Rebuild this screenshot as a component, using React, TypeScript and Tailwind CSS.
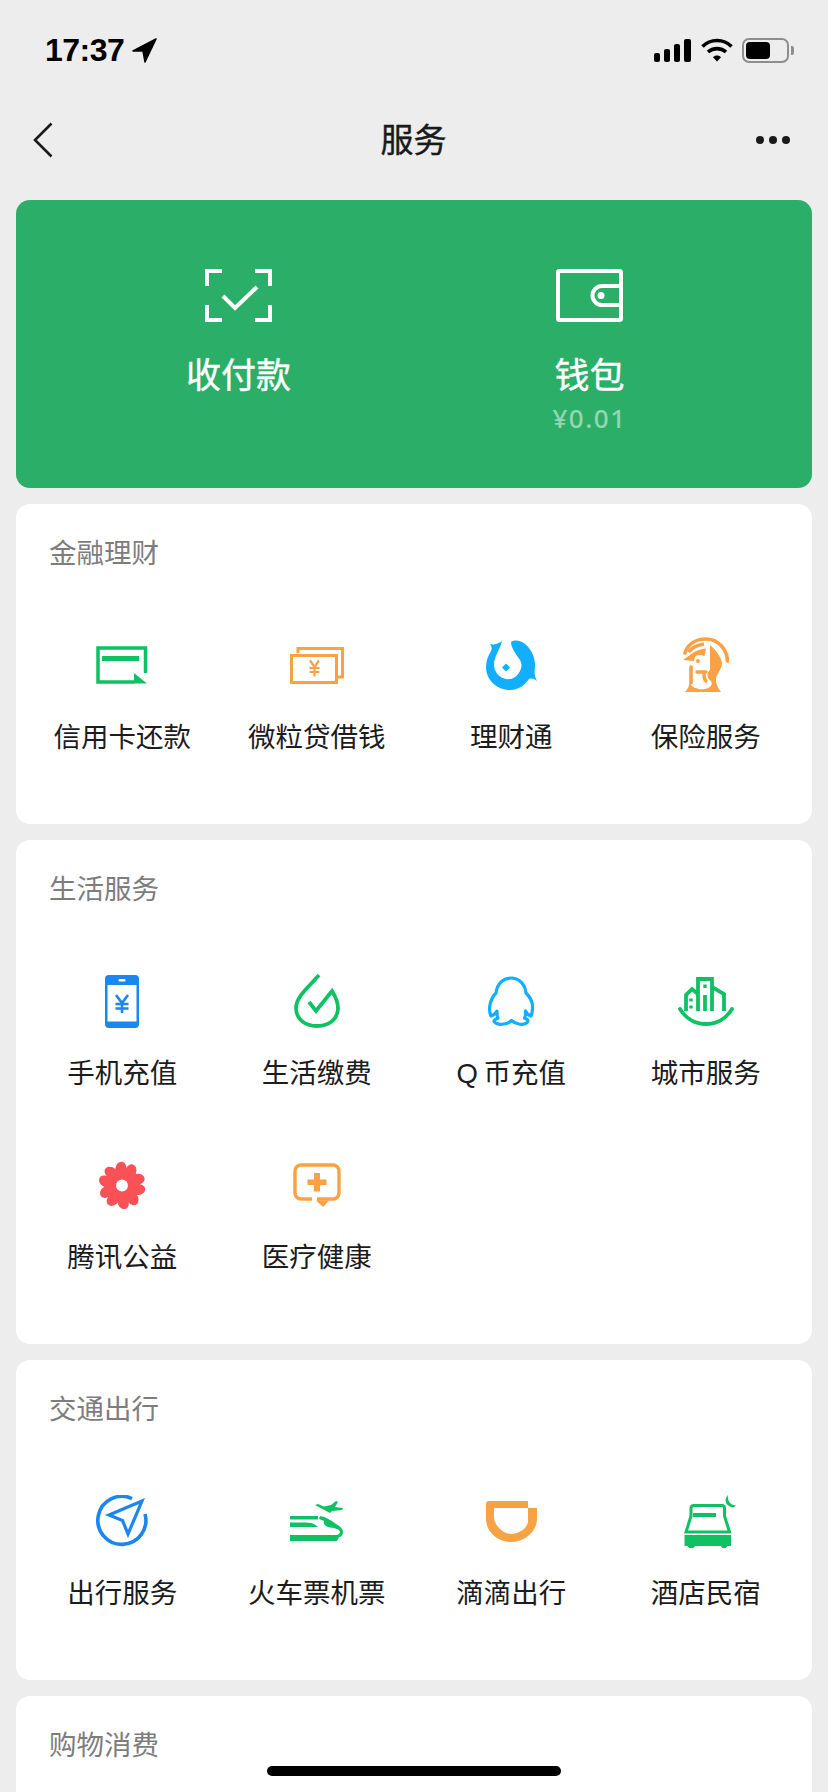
import type { ReactNode } from 'react';

const GREEN = '#0ec162';
const ORANGE = '#f9a145';
const SKY = '#12aeff';
const BLUE = '#1a86ee';
const RED = '#fa5157';

function CardIcon() {
  return (
    <svg width="52" height="38" viewBox="0 0 52 38" fill="none">
      <path d="M38 36H2V2H49.5V27" stroke={GREEN} strokeWidth="3.5" />
      <path d="M6 10H43V15H6Z" fill={GREEN} />
      <path d="M38 27L51 37.5H38Z" fill={GREEN} />
    </svg>
  );
}

function LoanIcon() {
  return (
    <svg width="54" height="37" viewBox="0 0 54 37" fill="none" stroke={ORANGE} strokeWidth="3">
      <path d="M8 6V1.5H52.5V30H48" />
      <rect x="1.5" y="8.5" width="45" height="27" />
      <path d="M20 13.5L24.5 20L29 13.5M24.5 20V29.5M19.5 21H29.5M19.5 25H29.5" strokeWidth="2.2" />
    </svg>
  );
}

function LicaiIcon() {
  return (
    <svg width="51" height="50" viewBox="0 0 51 50">
      <path
        d="M16 1C12 4 8 5 4 4C6 7 6 9 5 11C2 16 0 21 0 27C0 40 11 50 24 50C32 50 38 46 43 39C46 38 49 39 51 41C49 37 48 34 49 27C50 16 42 1 30 0.5C28 0.5 26 1 25 2C25 8 30 14 34 20C36 24 36 27 34 31C31 37 26 40 20 39C13 38 8 31 8 25C8 16 14 10 16 1Z"
        fill={SKY}
      />
      <path d="M20 23.5L24 27.5L20 31.5L16 27.5Z" fill={SKY} />
    </svg>
  );
}

function InsuranceIcon() {
  return (
    <svg width="46" height="56" viewBox="0 0 46 56" fill="none">
      <path d="M2 16C5 7 13 2 23 2C35 2 44 12 44.5 24" stroke={ORANGE} strokeWidth="3.6" strokeLinecap="round" />
      <path d="M5.5 15C9 10.5 14 8 21 7" stroke={ORANGE} strokeWidth="3.6" />
      {/* head with beak */}
      <path d="M0 23L9 16.5C13 13.5 18 12 23 11.5L21.5 19C17 17 13 18 12 20L11 24Z" fill={ORANGE} />
      {/* solid right side of the body */}
      <path d="M27 8C33 13 39 21 39 27C38 34 33 37 33 43C33 48 36 52 38 55H2C5 52 6 49 6.5 46C9 51 16 53 22 52C28 51 30 47 28 44C25 42 24.5 40 24.5 36L27 33Z" fill={ORANGE} />
      {/* left edge of the neck */}
      <path d="M8 30V46" stroke={ORANGE} strokeWidth="3.6" strokeLinecap="round" />
      {/* beard */}
      <path d="M14 35H23" stroke={ORANGE} strokeWidth="3.4" strokeLinecap="round" />
      <path d="M21 36C21 40 21 43 24 45" stroke={ORANGE} strokeWidth="3.4" />
      <circle cx="15" cy="24" r="2" fill={ORANGE} />
    </svg>
  );
}

function PhoneIcon() {
  return (
    <svg width="34" height="53" viewBox="0 0 34 53">
      <rect width="34" height="53" rx="4" fill={BLUE} />
      <rect x="2.5" y="10" width="29" height="36.5" fill="#fff" />
      <rect x="13.5" y="4" width="7" height="2.4" rx="1" fill="#fff" />
      <path d="M11 20L17 28L23 20M17 28V38M10.5 29H23.5M10.5 33.5H23.5" fill="none" stroke={BLUE} strokeWidth="2.6" />
    </svg>
  );
}

function BillIcon() {
  return (
    <svg width="46" height="54" viewBox="0 0 46 54" fill="none" stroke={GREEN} strokeWidth="3.8">
      <path d="M25 1C17 11 2 22 2 34C2 45 11 52 23 52C35 52 44 45 44 34C44 28 41 22 38 17L22 37L15 28" />
    </svg>
  );
}

function QqIcon() {
  return (
    <svg width="46" height="50" viewBox="0 0 46 50" fill="none" stroke={SKY} strokeWidth="3.2" strokeLinejoin="round">
      <path d="M23 2C31 2 37 8 38 17C42 21 45 26 44.5 32C44.5 36 44 38 43 40C40 39 38.5 37 37.5 35C37.5 38 37.5 41 36.5 42C39 43 40 44 40 45C39 48 34 49 31 48C28 47.5 26 47 23.5 44.5C21 47 19 48 15 48C11 49 6 47 6 45C6 44 8 43 10 42C9 41 9 38 9 35C8 37 6 39 3 40C2 38 1.5 35 1.5 32C2 26 4 21 8 17C9 8 15 2 23 2Z" />
    </svg>
  );
}

function CityIcon() {
  return (
    <svg width="56" height="50" viewBox="0 0 56 50" fill="none" stroke={GREEN} strokeWidth="3.8">
      <path d="M2 33C8 43 18 48 28 48C38 48 48 43 54 33" strokeLinecap="round" />
      <path d="M8 35V19L14 13L20 18" />
      <path d="M20 35V3H34V35" />
      <path d="M34 11L46 18V35" />
      <path d="M13 22.5V25.5M13 29.5V32.5" strokeWidth="3.4" />
      <path d="M27 8.5V12" strokeWidth="3.4" />
      <path d="M27 19V35" />
    </svg>
  );
}

function FlowerIcon() {
  return (
    <svg width="48" height="49" viewBox="-24 -24.5 48 49">
      {[14, 86, 158, 230, 302].map((angle) => (
        <path
          key={angle}
          transform={`rotate(${angle})`}
          d="M0 0C-5 -4 -11.5 -10 -10.5 -17.5C-9.5 -24 -2 -25.5 0 -18C2 -25.5 9.5 -24 10.5 -17.5C11.5 -10 5 -4 0 0Z"
          fill={RED}
        />
      ))}
      <circle r="9" fill={RED} />
      <circle r="6" fill="#fff" />
    </svg>
  );
}

function MedicalIcon() {
  return (
    <svg width="48" height="44" viewBox="0 0 48 44" fill="none">
      <path d="M19 36H8A6 6 0 0 1 2 30V8A6 6 0 0 1 8 2H40A6 6 0 0 1 46 8V30A6 6 0 0 1 40 36H24" stroke={ORANGE} strokeWidth="3.4" />
      <path d="M23 37.5H36L30 44Z" fill={ORANGE} />
      <path d="M21 10H27V16.5H33.5V22H27V28.5H21V22H14.5V16.5H21Z" fill={ORANGE} />
    </svg>
  );
}

function TravelIcon() {
  return (
    <svg width="52" height="52" viewBox="0 0 52 52" fill="none" stroke={BLUE}>
      <path d="M36 3.6A24 24 0 1 0 49 19" strokeWidth="3.6" />
      <path d="M46 6L13 20L26.5 25.5L32 39Z" strokeWidth="3.2" />
    </svg>
  );
}

function TrainIcon() {
  return (
    <svg width="54" height="40" viewBox="0 0 54 40" fill={GREEN}>
      <path d="M25 4L28 3L34 5.5L41 4L46 0L48 1L45 6L53 7L52 9L42 10L40 12Z" />
      <path d="M0 15H28V18.5H0Z" />
      <path d="M0 21.5H15C21 21.5 25 23 28 26H0Z" />
      <path d="M0 34H50L47 40H0Z" />
      <path d="M30 15C36 16 41 19 46 23C50 25 53 28 53 31C53 33 52 35 50 36H44C47 34 50 33 50 31C50 28 44 27 38 26C35 25 33 22 34 20L29 18Z" />
    </svg>
  );
}

function DidiIcon() {
  return (
    <svg width="51" height="41" viewBox="0 0 51 41">
      <path
        fillRule="evenodd"
        d="M0 3Q0 0 3 0H42V7H51V18C51 31 38 41 25 41C12 41 0 31 0 18ZM8 7V16C8 24 17 33 25 33C33 33 42 27 42 20V7Z"
        fill={ORANGE}
      />
    </svg>
  );
}

function HotelIcon() {
  return (
    <svg width="60" height="54" viewBox="-8 0 60 54" fill="none">
      <path d="M44 1C40 5 41 11 47 13C49 13.5 51 13 52 11.5C47 11.5 43 7 44 1Z" fill={GREEN} />
      <path d="M7 22V14Q7 11.5 10 11.5H38Q40.5 11.5 40.5 14V22L45.5 38H2L7 22Z" stroke={GREEN} strokeWidth="3" />
      <path d="M9 19H32V23H9Z" fill={GREEN} />
      <path d="M0.5 41H47V52H43.5L42 54H38L37 52H11L9.5 54H5L3.5 52H0.5Z" fill={GREEN} />
    </svg>
  );
}

function ServiceCell({ icon, label }: { icon: ReactNode; label: string }) {
  return (
    <div className="flex flex-col items-center pt-[65px]">
      <div className="flex h-[56px] items-center justify-center">{icon}</div>
      <span className="mt-[27px] text-[27.5px] leading-[36px] text-[#1c1c1c]">{label}</span>
    </div>
  );
}

function Section({ title, items }: { title: string; items: { icon: ReactNode; label: string }[] }) {
  return (
    <section className="rounded-[14px] bg-white pb-[68px]">
      <h2 className="pl-[33px] pt-[32px] text-[27.5px] font-normal leading-[36px] text-[#7d7d7d]">{title}</h2>
      <div className="grid grid-cols-4 px-[9px]">
        {items.map((item) => (
          <ServiceCell key={item.label} icon={item.icon} label={item.label} />
        ))}
      </div>
    </section>
  );
}

export default function App() {
  return (
    <div
      className="relative h-[1792px] w-[828px] overflow-hidden bg-[#ededed]"
      style={{ fontFamily: '"Liberation Sans", "Noto Sans CJK SC", sans-serif' }}
    >
      {/* Status bar */}
      <div className="flex h-[100px] items-center justify-between pl-[45px] pr-[34px]">
        <div className="flex items-center gap-[8px]">
          <span className="text-[32px] font-bold leading-none tracking-[-0.5px] text-black">17:37</span>
          <svg width="25" height="25" viewBox="0 0 25 25" fill="#000">
            <path d="M24 1L1 13H11L13 24Z" stroke="#000" strokeWidth="1.5" strokeLinejoin="round" />
          </svg>
        </div>
        <div className="flex items-center">
          <div className="flex items-end gap-[4px]">
            <div className="h-[9px] w-[6px] rounded-[2px] bg-black" />
            <div className="h-[13px] w-[6px] rounded-[2px] bg-black" />
            <div className="h-[18px] w-[6px] rounded-[2px] bg-black" />
            <div className="h-[23px] w-[7px] rounded-[2px] bg-black" />
          </div>
          <svg className="ml-[10px]" width="32" height="24" viewBox="0 0 32 24" fill="none" stroke="#000" strokeWidth="3.6">
            <path d="M1.5 8.5C9.5 0.5 22.5 0.5 30.5 8.5" />
            <path d="M7 14C12 9.5 20 9.5 25 14" />
            <path d="M12 19.2L16 23.5L20 19.2C18 17 14 17 12 19.2Z" fill="#000" stroke="none" />
          </svg>
          <div className="ml-[9px] flex h-[25px] w-[47px] items-center rounded-[7px] border-2 border-[#8e8e8e] pl-[2px]">
            <div className="h-[17px] w-[24px] rounded-[4px] bg-black" />
          </div>
          <div className="ml-[2px] h-[9px] w-[3px] rounded-r-[2px] bg-[#8e8e8e]" />
        </div>
      </div>

      {/* Nav */}
      <div className="grid h-[80px] grid-cols-3 items-center pl-[37px] pr-[38px]">
        <svg className="-ml-[4px]" width="20" height="36" viewBox="0 0 20 36" fill="none" stroke="#1a1a1a" strokeWidth="2.6">
          <path d="M18.5 1.5L2 18L18.5 34.5" />
        </svg>
        <h1 className="text-center text-[33px] font-normal leading-none text-[#1a1a1a] [-webkit-text-stroke:0.4px_#1a1a1a]">服务</h1>
        <div className="flex justify-end gap-[5px]">
          <div className="h-[8px] w-[8px] rounded-full bg-[#1a1a1a]" />
          <div className="h-[8px] w-[8px] rounded-full bg-[#1a1a1a]" />
          <div className="h-[8px] w-[8px] rounded-full bg-[#1a1a1a]" />
        </div>
      </div>

      <div className="mt-[20px] flex flex-col gap-[16px] px-[16px]">
        {/* Green pay card */}
        <div className="grid h-[288px] grid-cols-2 rounded-[14px] bg-[#2bae67] px-[47px] pt-[69px] text-white">
          <div className="flex flex-col items-center">
            <svg width="67" height="53" viewBox="0 0 67 53" fill="none" stroke="#fff" strokeWidth="4">
              <path d="M17 2H2V17M50 2H65V17M17 51H2V36M50 51H65V36" />
              <path d="M18 27L30 39L52 18" />
            </svg>
            <span className="mt-[31px] text-[35px] font-normal leading-[46px] [-webkit-text-stroke:0.4px_white]">收付款</span>
          </div>
          <div className="flex flex-col items-center">
            <svg width="67" height="53" viewBox="0 0 67 53" fill="none" stroke="#fff" strokeWidth="4">
              <rect x="2" y="2" width="63" height="49" rx="1.5" />
              <path d="M65 17H46A9.5 9.5 0 0 0 46 36H65" />
              <circle cx="45" cy="26.5" r="3.5" fill="#fff" stroke="none" />
            </svg>
            <span className="mt-[31px] text-[35px] font-normal leading-[46px] [-webkit-text-stroke:0.4px_white]">钱包</span>
            <span className="mt-[1px] text-[26px] font-medium leading-[36px] tracking-[1.5px] text-white/50" style={{ fontFamily: '"Noto Sans", sans-serif' }}>¥0.01</span>
          </div>
        </div>

        <Section
          title="金融理财"
          items={[
            { icon: <CardIcon />, label: '信用卡还款' },
            { icon: <LoanIcon />, label: '微粒贷借钱' },
            { icon: <LicaiIcon />, label: '理财通' },
            { icon: <InsuranceIcon />, label: '保险服务' },
          ]}
        />
        <Section
          title="生活服务"
          items={[
            { icon: <PhoneIcon />, label: '手机充值' },
            { icon: <BillIcon />, label: '生活缴费' },
            { icon: <QqIcon />, label: 'Q\u2009币充值' },
            { icon: <CityIcon />, label: '城市服务' },
            { icon: <FlowerIcon />, label: '腾讯公益' },
            { icon: <MedicalIcon />, label: '医疗健康' },
          ]}
        />
        <Section
          title="交通出行"
          items={[
            { icon: <TravelIcon />, label: '出行服务' },
            { icon: <TrainIcon />, label: '火车票机票' },
            { icon: <DidiIcon />, label: '滴滴出行' },
            { icon: <HotelIcon />, label: '酒店民宿' },
          ]}
        />
        <section className="h-[200px] rounded-[14px] bg-white">
          <h2 className="pl-[33px] pt-[32px] text-[27.5px] font-normal leading-[36px] text-[#7d7d7d]">购物消费</h2>
        </section>
      </div>

      {/* Home indicator */}
      <div className="absolute bottom-[16px] left-[267px] h-[10px] w-[294px] rounded-full bg-black" />
    </div>
  );
}
